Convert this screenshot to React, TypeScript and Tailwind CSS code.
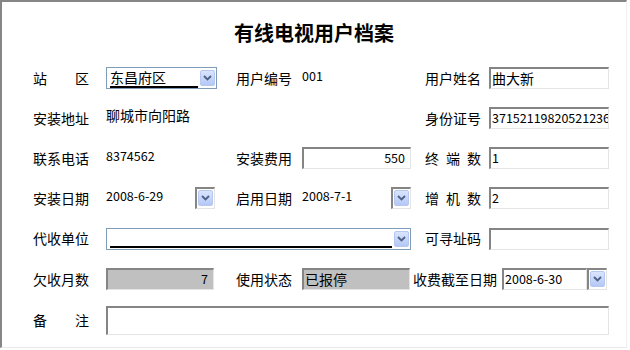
import React from "react";

const sunken =
  "border-t-2 border-l-2 border-r border-b border-t-[#858585] border-l-[#858585] border-r-[#e4e4e4] border-b-[#e4e4e4]";

function Chevron() {
  return (
    <svg width="9" height="6" viewBox="0 0 9 6">
      <path d="M1 1 L4.5 4.5 L8 1" fill="none" stroke="#4d6185" strokeWidth="1.8" />
    </svg>
  );
}

function DropBtn() {
  return (
    <span className="flex h-[16px] w-[15px] items-center justify-center rounded-[2px] border border-[#b7c8ef] bg-gradient-to-b from-[#dae4fd] to-[#b4c8f6]">
      <Chevron />
    </span>
  );
}

function DateBtn() {
  return (
    <div className={`flex h-[22px] w-[20px] items-start bg-white pl-[1px] pt-[1px] ${sunken}`}>
      <DropBtn />
    </div>
  );
}

// label, optionally spread across the 4-char width
function Label({ text, spread, className = "" }: { text: string; spread?: boolean; className?: string }) {
  if (!spread) return <div className={`shrink-0 whitespace-nowrap text-[14px] ${className}`}>{text}</div>;
  return (
    <div className={`shrink-0 ${className}`}>
      <div className="flex w-[56px] justify-between text-[14px]">
        {text.split("").map((c, i) => (
          <span key={i}>{c}</span>
        ))}
      </div>
    </div>
  );
}

function Input({ value, w, gray, right, num }: { value?: string; w: string; gray?: boolean; right?: boolean; num?: boolean }) {
  return (
    <div
      className={`flex h-[22px] shrink-0 items-center overflow-hidden whitespace-nowrap px-[1px] ${w} ${sunken} ${
        gray ? "bg-[#c0c0c0]" : "bg-white"
      } ${right ? "justify-end pr-[5px]" : ""} ${num ? "text-[12.5px]" : "text-[14px]"}`}
    >
      {value}
    </div>
  );
}

function Select({ value, w, line }: { value: string; w: string; line: string }) {
  return (
    <div className={`flex h-[22px] shrink-0 items-center border border-[#7f9db9] bg-white pl-[3px] pr-[1px] ${w}`}>
      <div className="flex h-[19px] flex-1 items-end">
        <span className={`h-[19px] border-b-2 border-black text-[14px] leading-[16px] ${line}`}>{value}</span>
      </div>
      <DropBtn />
    </div>
  );
}

function Row({ children, h = "h-[40px]" }: { children: React.ReactNode; h?: string }) {
  return <div className={`flex items-center pl-[31px] ${h}`}>{children}</div>;
}

export default function App() {
  return (
    <div className="h-[350px] w-[630px] bg-white font-['Noto_Sans_CJK_SC',sans-serif] text-black">
      <div className="h-[348px] w-[627px] border-t-2 border-l-2 border-r border-b border-t-[#868686] border-l-[#868686] border-r-[#f0f0f0] border-b-[#e8e8e8]">
        <div className="h-[56px] pt-[19px] text-center text-[20px] font-bold leading-[24px]">有线电视用户档案</div>

        <Row>
          <Label text="站区" spread className="w-[73px]" />
          <Select value="东昌府区" w="w-[111px]" line="w-[88px]" />
          <Label text="用户编号" className="ml-[19px] w-[66px]" />
          <div className="w-[123px] text-[12.5px] leading-[14px] -mt-[4px]">001</div>
          <Label text="用户姓名" className="w-[64px]" />
          <Input value="曲大新" w="w-[120px]" />
        </Row>

        <Row>
          <Label text="安装地址" className="w-[73px]" />
          <div className="w-[319px] text-[14px] -mt-[5px]">聊城市向阳路</div>
          <Label text="身份证号" className="w-[64px]" />
          <Input value="37152119820521236" w="w-[120px]" num />
        </Row>

        <Row>
          <Label text="联系电话" className="w-[73px]" />
          <div className="w-[130px] text-[12.5px] -mt-[3px]">8374562</div>
          <Label text="安装费用" className="w-[66px]" />
          <Input value="550" w="w-[109px]" right num />
          <Label text="终端数" spread className="ml-[14px] w-[64px]" />
          <Input value="1" w="w-[120px]" num />
        </Row>

        <Row>
          <Label text="安装日期" className="w-[73px]" />
          <div className="w-[89px] text-[12.5px] -mt-[3px]">2008-6-29</div>
          <DateBtn />
          <Label text="启用日期" className="ml-[21px] w-[66px]" />
          <div className="w-[89px] text-[12.5px] -mt-[3px]">2008-7-1</div>
          <DateBtn />
          <Label text="增机数" spread className="ml-[14px] w-[64px]" />
          <Input value="2" w="w-[120px]" num />
        </Row>

        <Row h="h-[41px]">
          <Label text="代收单位" className="w-[73px]" />
          <Select value="" w="w-[305px]" line="w-[282px]" />
          <Label text="可寻址码" className="ml-[14px] w-[64px]" />
          <Input w="w-[120px]" />
        </Row>

        <Row>
          <Label text="欠收月数" className="w-[73px]" />
          <Input value="7" w="w-[108px]" gray right num />
          <Label text="使用状态" className="ml-[22px] w-[66px]" />
          <Input value="已报停" w="w-[108px]" gray />
          <Label text="收费截至日期" className="ml-[3px] w-[89px]" />
          <Input value="2008-6-30" w="w-[85px]" num />
          <DateBtn />
        </Row>

        <Row h="h-[42px]">
          <Label text="备注" spread className="w-[73px]" />
          <div className={`h-[29px] w-[503px] bg-white ${sunken}`} />
        </Row>
      </div>
    </div>
  );
}
